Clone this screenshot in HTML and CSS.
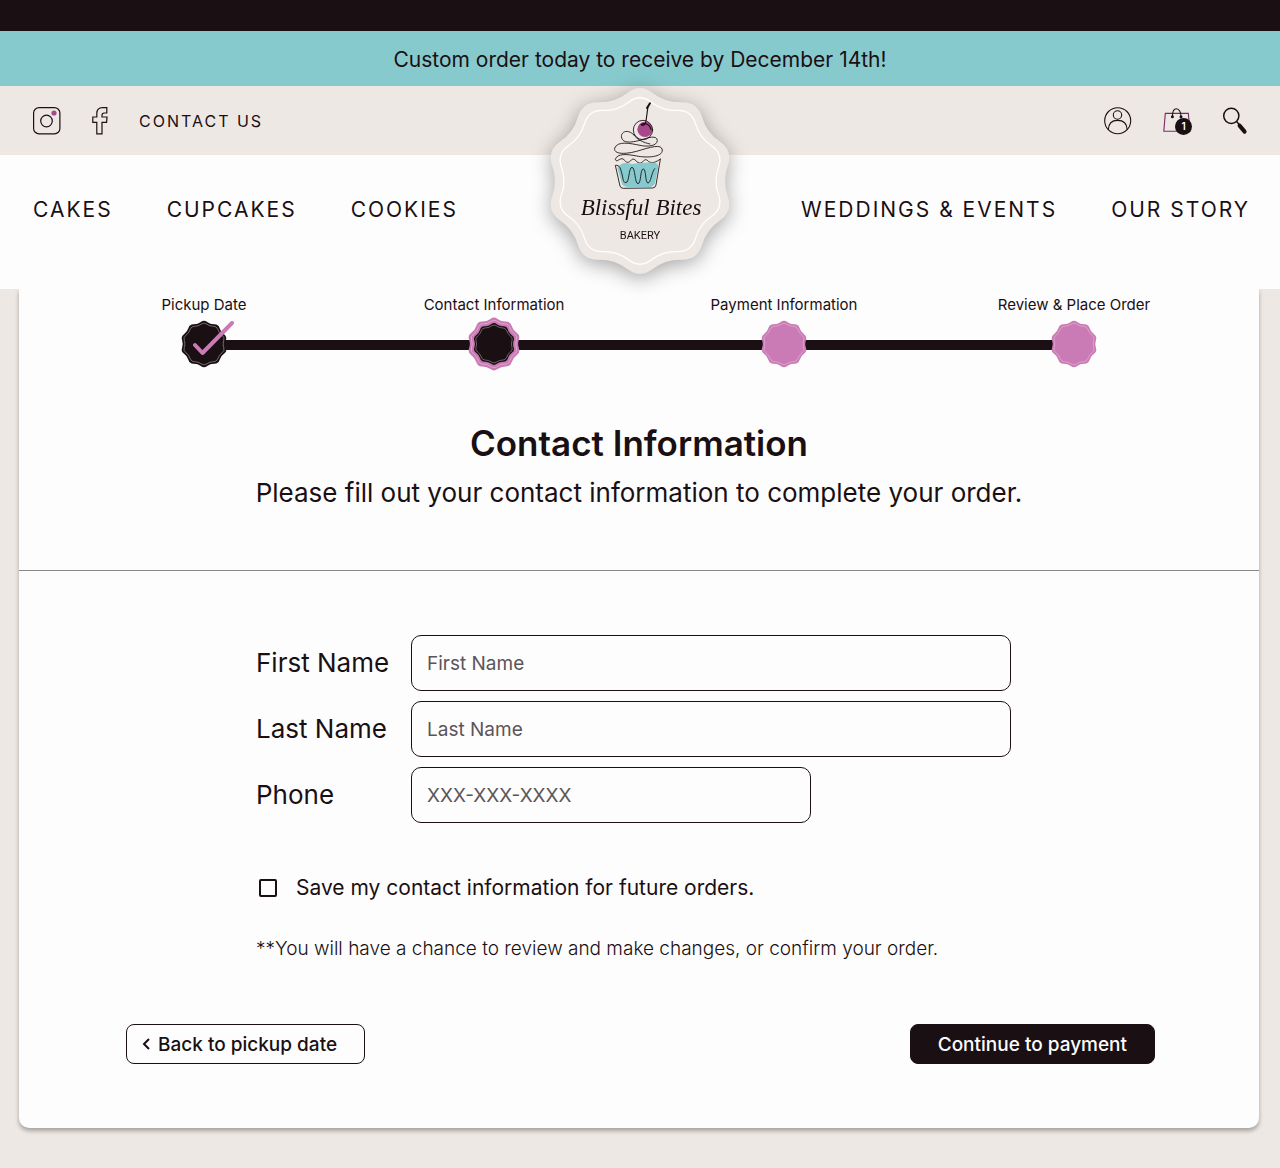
FILE: index.html
```html
<!DOCTYPE html>
<html lang="en">
<head>
    <meta charset="UTF-8">
    <meta name="viewport" content="width=device-width, initial-scale=1.0">
    <title>Blissful Bites Bakery - Contact Information</title>
    <link rel="stylesheet" href="styles.css">
</head>
<body>
    <!-- scalloped badge shape, shared by the logo and the steps -->
    <svg class="sprite" aria-hidden="true">
        <defs>
            <path id="scallop" d="M-12.7 -88.1 Q0 -97.9 12.7 -88.1 Q25.4 -78.3 41.5 -78.8 Q57.5 -79.2 62.1 -63.8 Q66.6 -48.4 79.9 -39.4 Q93.1 -30.3 87.7 -15.2 Q82.3 0 87.7 15.2 Q93.1 30.3 79.9 39.4 Q66.6 48.4 62.1 63.8 Q57.5 79.2 41.5 78.8 Q25.4 78.3 12.7 88.1 Q0 97.9 -12.7 88.1 Q-25.4 78.3 -41.5 78.8 Q-57.5 79.2 -62.1 63.8 Q-66.6 48.4 -79.9 39.4 Q-93.1 30.3 -87.7 15.2 Q-82.3 0 -87.7 -15.2 Q-93.1 -30.3 -79.9 -39.4 Q-66.6 -48.4 -62.1 -63.8 Q-57.5 -79.2 -41.5 -78.8 Q-25.4 -78.3 -12.7 -88.1 Z"/>
        </defs>
    </svg>

    <header class="site-header">
        <div class="top-strip"></div>
        <div class="announcement">Custom order today to receive by December 14th!</div>

        <div class="utility-bar">
            <div class="utility-left">
                <a href="#" aria-label="Instagram">
                    <svg width="28" height="28" viewBox="0 0 28 28" fill="none" stroke="#1a0f13">
                        <rect x="0.6" y="0.6" width="26.3" height="26.3" rx="5.5" stroke-width="1.2"/>
                        <circle cx="13.5" cy="14" r="5.8" stroke-width="1.2"/>
                        <circle cx="21" cy="6" r="2.6" fill="#a8488c" stroke="none"/>
                    </svg>
                </a>
                <a href="#" aria-label="Facebook">
                    <svg width="16" height="28" viewBox="0 0 16 28" fill="none" stroke="#1a0f13" stroke-width="1.2">
                        <path d="M4.8 26.8V15.4H0.8V10H4.8V6.6C4.8 3 7 0.7 10.6 0.7H14.8V6H12.2C10.6 6 10 6.8 10 8.2V10H15L14.6 15.4H10V26.8Z"/>
                    </svg>
                </a>
                <a href="#" class="contact-link">CONTACT US</a>
            </div>
            <div class="utility-right">
                <a href="#" aria-label="Account">
                    <svg width="28" height="28" viewBox="0 0 28 28" fill="none" stroke="#1a0f13" stroke-width="1.1">
                        <circle cx="13.7" cy="13.7" r="13"/>
                        <circle cx="13.5" cy="8" r="4.2"/>
                        <path d="M4.3 22.8C4.5 16.5 8 13.4 13.5 13.4S23 16.5 23.2 22.8"/>
                    </svg>
                </a>
                <a href="#" class="bag" aria-label="Shopping bag, 1 item">
                    <svg width="28" height="28" viewBox="0 0 28 28" fill="none">
                        <path d="M2.3 6.4H25.3L27 24.2H0.8Z" stroke="#7b2a62" stroke-width="1.1"/>
                        <path d="M9.4 9.6C9.4 5 11 1.7 13.5 1.7S18 5 18 9.6" stroke="#1a0f13" stroke-width="1.1"/>
                        <circle cx="9.4" cy="9.8" r="1.5" fill="#1a0f13"/>
                        <circle cx="18" cy="9.8" r="1.5" fill="#1a0f13"/>
                    </svg>
                    <span class="bag-count">1</span>
                </a>
                <a href="#" aria-label="Search">
                    <svg width="26" height="28" viewBox="0 0 26 28" fill="none" stroke="#1a0f13">
                        <circle cx="9.3" cy="8.8" r="7.6" stroke-width="1.5"/>
                        <path d="M14.5 14.6L17.5 17.8" stroke-width="1.5"/>
                        <path d="M17.6 18.6L22.6 24.6" stroke-width="4" stroke-linecap="round"/>
                    </svg>
                </a>
            </div>
        </div>

        <nav class="main-nav">
            <div class="nav-group">
                <a href="#">CAKES</a>
                <a href="#">CUPCAKES</a>
                <a href="#">COOKIES</a>
            </div>
            <div class="nav-group">
                <a href="#">WEDDINGS &amp; EVENTS</a>
                <a href="#">OUR STORY</a>
            </div>
        </nav>

        <a href="#" class="logo" aria-label="Blissful Bites Bakery">
            <svg width="200" height="200" viewBox="-100 -100 200 200">
                <use href="#scallop" fill="#eee8e4"/>
                <use href="#scallop" transform="scale(0.895)" fill="none" stroke="#ffffff" stroke-width="1.4"/>
                <g transform="translate(-100 -101) scale(0.3333)" fill="none" stroke="#1a0f13" stroke-width="2.6" stroke-linecap="round" stroke-linejoin="round">
                    <!-- cherry -->
                    <circle cx="315" cy="148" r="23" fill="#a8488c" stroke="none"/>
                    <circle cx="309" cy="150" r="29"/>
                    <path d="M330 70L321 84" stroke-width="6"/>
                    <path d="M324 80C321 100 320 112 317 128C314 137 308 138 303 134C312 128 328 130 333 148" stroke-width="3.4"/>
                    <!-- frosting -->
                    <path d="M281 164C262 145 240 156 245 174C250 190 272 188 300 181C325 172 350 165 352 181C352 199 320 201 300 196C270 190 234 182 224 204C220 225 260 222 290 214C330 202 365 190 367 210C368 232 320 234 290 228C260 222 232 220 226 238C230 250 240 232 250 237C260 250 266 250 275 239C285 231 290 252 302 249C312 245 315 232 325 244C335 252 350 246 361 237"/>
                    <path d="M281 164C290 178 310 188 330 192"/>
                    <!-- cup -->
                    <path d="M232 264Q245 242 275 252Q310 246 345 248Q356 250 354 265L345 310Q340 322 325 321L265 321Q250 320 246 312Z" fill="#87cacd" stroke="none"/>
                    <path d="M361 238L348 315Q346 324 338 324L250 325Q242 325 240 318L226 256C240 254 242 268 246 282C250 300 250 308 258 308C268 308 266 262 276 262C286 262 284 311 294 311C304 311 300 267 310 267C319 267 315 309 324 309C333 309 334 277 344 266"/>
                </g>
                <text x="1" y="34" class="logo-name">Blissful Bites</text>
                <text x="0" y="58" class="logo-sub">BAKERY</text>
            </svg>
        </a>
    </header>

    <main class="card">
        <ol class="steps">
            <li class="step">
                <span>Pickup Date</span>
                <div class="badge">
                    <svg width="54" height="54" viewBox="-108 -108 216 216">
                        <use href="#scallop" fill="#1a0f13"/>
                        <use href="#scallop" transform="scale(0.9)" fill="none" stroke="#b5afb1" stroke-width="2.5"/>
                    </svg>
                    <svg class="check" width="44" height="36" viewBox="0 0 44 36" fill="none">
                        <path d="M3 24L10.5 32L40 2" stroke="#ca7ab4" stroke-width="4" stroke-linecap="round" stroke-linejoin="round"/>
                    </svg>
                </div>
            </li>
            <li class="step">
                <span>Contact Information</span>
                <div class="badge">
                    <svg width="54" height="54" viewBox="-95 -95 190 190">
                        <use href="#scallop" fill="#ca7ab4"/>
                        <use href="#scallop" transform="scale(0.9)" fill="none" stroke="#e6c0db" stroke-width="2.5"/>
                        <use href="#scallop" transform="scale(0.79)" fill="#1a0f13"/>
                        <use href="#scallop" transform="scale(0.72)" fill="none" stroke="#b5afb1" stroke-width="2.5"/>
                    </svg>
                </div>
            </li>
            <li class="step">
                <span>Payment Information</span>
                <div class="badge">
                    <svg width="54" height="54" viewBox="-108 -108 216 216">
                        <use href="#scallop" fill="#ca7ab4"/>
                        <use href="#scallop" transform="scale(0.9)" fill="none" stroke="#e6c0db" stroke-width="2.5"/>
                    </svg>
                </div>
            </li>
            <li class="step">
                <span>Review &amp; Place Order</span>
                <div class="badge">
                    <svg width="54" height="54" viewBox="-108 -108 216 216">
                        <use href="#scallop" fill="#ca7ab4"/>
                        <use href="#scallop" transform="scale(0.9)" fill="none" stroke="#e6c0db" stroke-width="2.5"/>
                    </svg>
                </div>
            </li>
        </ol>

        <div class="intro">
            <h1>Contact Information</h1>
            <p>Please fill out your contact information to complete your order.</p>
        </div>

        <form>
            <div class="fields">
                <label for="first-name">First Name</label>
                <input type="text" id="first-name" placeholder="First Name">
                <label for="last-name">Last Name</label>
                <input type="text" id="last-name" placeholder="Last Name">
                <label for="phone">Phone</label>
                <input type="tel" id="phone" class="phone" placeholder="XXX-XXX-XXXX">
            </div>

            <div class="save-row">
                <input type="checkbox" id="save-info">
                <label for="save-info">Save my contact information for future orders.</label>
            </div>
            <p class="note">**You will have a chance to review and make changes, or confirm your order.</p>

            <div class="actions">
                <button type="button" class="back-button">
                    <svg width="8" height="12" viewBox="0 0 8 12" fill="none" stroke="#1a0f13" stroke-width="2"><path d="M7 1L2 6L7 11"/></svg>
                    Back to pickup date
                </button>
                <button type="submit" class="continue-button">Continue to payment</button>
            </div>
        </form>
    </main>
</body>
</html>
```
FILE: styles.css
```css
* {
    box-sizing: border-box;
}

body {
    margin: 0;
    background-color: #eee8e4;
    color: #1a0f13;
    font-family: Inter, sans-serif;
}

a {
    color: inherit;
    text-decoration: none;
}

svg {
    display: block;
}

.sprite {
    position: absolute;
    width: 0;
    height: 0;
}

/* Header */
.site-header {
    position: relative;
}

.top-strip {
    height: 31px;
    background-color: #1a0f13;
}

.announcement {
    padding: 17px 16px 14px;
    background-color: #87cacd;
    font-size: 21px;
    line-height: 24px;
    text-align: center;
}

.utility-bar {
    display: flex;
    justify-content: space-between;
    align-items: center;
    height: 69px;
    padding: 0 32px 0 33px;
}

.utility-left,
.utility-right {
    display: flex;
    align-items: center;
    gap: 31px;
}

.contact-link {
    font-size: 16px;
    letter-spacing: 2px;
}

.bag {
    position: relative;
}

.bag-count {
    position: absolute;
    left: 12px;
    top: 11px;
    width: 17px;
    height: 17px;
    border-radius: 50%;
    background-color: #1a0f13;
    color: white;
    font-size: 10px;
    font-weight: 600;
    line-height: 17px;
    text-align: center;
}

.main-nav {
    display: flex;
    justify-content: space-between;
    padding: 43px 30px 67px 33px;
    background-color: #fdfdfd;
    font-size: 21px;
    line-height: 24px;
    letter-spacing: 2px;
}

.nav-group {
    display: flex;
    gap: 54px;
}

.logo {
    position: absolute;
    top: 81px;
    left: 50%;
    transform: translateX(-50%);
    filter: drop-shadow(0 4px 10px rgba(0, 0, 0, 0.35));
}

.logo-name {
    font-family: "Liberation Serif", serif;
    font-size: 23px;
    font-style: italic;
    text-anchor: middle;
    fill: #1a0f13;
}

.logo-sub {
    font-family: Roboto, sans-serif;
    font-size: 11px;
    text-anchor: middle;
    fill: #1a0f13;
}

/* Checkout card */
.card {
    margin: 0 21px 40px 19px;
    padding-bottom: 64px;
    border-radius: 0 0 10px 10px;
    background-color: #fdfdfd;
    box-shadow: 0 3px 4px rgba(0, 0, 0, 0.3);
}

.steps {
    display: grid;
    grid-template-columns: repeat(4, 1fr);
    margin: 0;
    padding: 6px 40px 0;
    list-style: none;
}

.step {
    position: relative;
    display: flex;
    flex-direction: column;
    align-items: center;
    font-size: 15px;
    line-height: 20px;
}

/* line to the next step */
.step:not(:last-child)::before {
    content: "";
    position: absolute;
    top: 45px;
    left: 50%;
    width: 100%;
    height: 10px;
    background-color: #1a0f13;
}

.badge {
    position: relative;
    z-index: 1;
    margin-top: 2px;
}

.check {
    position: absolute;
    left: 15px;
    top: 4px;
}

.intro {
    margin-top: 50px;
    padding-bottom: 61px;
    border-bottom: 1px solid #8c8789;
    text-align: center;
}

.intro h1 {
    margin: 0;
    font-size: 35px;
    font-weight: 600;
    line-height: 44px;
}

.intro p {
    margin: 12px 0 0;
    font-size: 26px;
    line-height: 32px;
}

.fields,
.save-row,
.note {
    max-width: 766px;
    margin: 0 auto;
}

.fields {
    display: grid;
    grid-template-columns: 155px minmax(0, 600px);
    row-gap: 10px;
    align-items: center;
    margin-top: 64px;
}

.fields label {
    padding-bottom: 2px;
    font-size: 26px;
}

.fields input {
    width: 100%;
    height: 56px;
    padding: 0 15px;
    border: 1px solid #1a0f13;
    border-radius: 10px;
    background-color: #fdfdfd;
    color: #1a0f13;
    font-family: inherit;
    font-size: 19px;
}

.fields input.phone {
    max-width: 400px;
}

.fields input::placeholder {
    color: #5c5557;
    opacity: 1;
}

.save-row {
    display: flex;
    align-items: center;
    margin-top: 52px;
    font-size: 21px;
    line-height: 26px;
}

.save-row input {
    appearance: none;
    width: 18px;
    height: 18px;
    margin: 0 19px 0 3px;
    border: 2px solid #1a0f13;
    border-radius: 2px;
}

.save-row input:checked {
    background-color: #1a0f13;
}

.note {
    margin-top: 36px;
    font-size: 19px;
    font-weight: 300;
    line-height: 24px;
}

.actions {
    display: flex;
    justify-content: space-between;
    margin-top: 63px;
    padding: 0 104px 0 107px;
}

.actions button {
    height: 40px;
    border: 1px solid #1a0f13;
    border-radius: 8px;
    font-family: inherit;
    font-size: 19px;
    font-weight: 500;
    cursor: pointer;
}

.back-button {
    display: flex;
    align-items: center;
    gap: 8px;
    padding: 0 27px 0 15px;
    background-color: #fdfdfd;
    color: #1a0f13;
}

.continue-button {
    padding: 0 27px;
    background-color: #1a0f13;
    color: #fdfdfd;
}
```
